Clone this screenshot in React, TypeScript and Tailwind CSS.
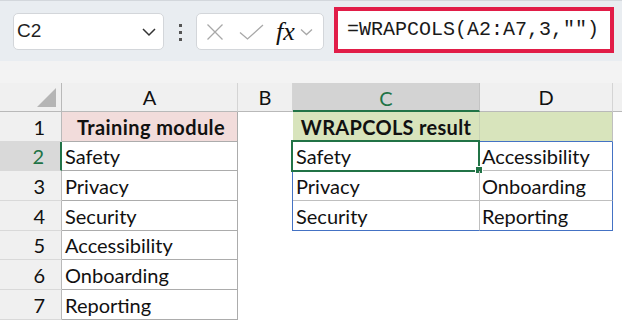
import React from "react";

const GRID_FONT = { fontFamily: "Lato, 'Open Sans', sans-serif" };

const rowHeights = ["h-[30px]", "h-[29px]", "h-[30px]", "h-[30px]", "h-[29px]", "h-[30px]", "h-[30px]"];
const listA = ["Training module", "Safety", "Privacy", "Security", "Accessibility", "Onboarding", "Reporting"];
const wrapped = [
  ["Safety", "Accessibility"],
  ["Privacy", "Onboarding"],
  ["Security", "Reporting"],
];

function Toolbar() {
  return (
    <div className="flex h-[61px] items-start border-t border-[#d3d7dc] bg-[#e9edf1]">
      <div className="ml-[13px] mt-[12px] flex h-[37px] w-[151px] items-center justify-between rounded-[5px] border border-[#d3d6da] bg-white pl-[3px] pr-[6px]">
        <span className="text-[19px] text-[#1f1f1f]" style={{ fontFamily: "'Liberation Sans', Arial, sans-serif" }}>
          C2
        </span>
        <svg width="16" height="10" viewBox="0 0 16 10" fill="none">
          <path d="M2 2l6 6 6-6" stroke="#333" strokeWidth="1.5" />
        </svg>
      </div>
      <div className="mt-[23px] flex w-[32px] flex-col items-center gap-[4px]">
        <span className="h-[3px] w-[3px] bg-[#555]" />
        <span className="h-[3px] w-[3px] bg-[#555]" />
        <span className="h-[3px] w-[3px] bg-[#555]" />
      </div>
      <div className="mt-[12px] flex h-[37px] w-[128px] items-center rounded-[5px] border border-[#d3d6da] bg-white pl-[9px]">
        <svg width="18" height="18" viewBox="0 0 18 18" fill="none">
          <path d="M1.5 1.5l15 15M16.5 1.5l-15 15" stroke="#a8a8a8" strokeWidth="1.3" />
        </svg>
        <svg className="ml-[15px]" width="25" height="16" viewBox="0 0 25 16" fill="none">
          <path d="M1 8.5l7.5 6.5L24 1" stroke="#a8a8a8" strokeWidth="1.3" />
        </svg>
        <span
          className="ml-[12px] text-[26px] italic leading-none text-[#111]"
          style={{ fontFamily: "'Liberation Serif', 'Times New Roman', serif" }}
        >
          fx
        </span>
        <svg className="ml-[5px]" width="13" height="8" viewBox="0 0 13 8" fill="none">
          <path d="M1 1.5l5.5 5 5.5-5" stroke="#a8a8a8" strokeWidth="1.3" />
        </svg>
      </div>
      <div className="ml-[10px] mt-[6px] flex h-[46px] w-[280px] items-center border-[4px] border-[#e11d48] bg-white pl-[9px]">
        <span className="text-[20px] text-[#1a1a1a]" style={{ fontFamily: "'Liberation Mono', 'DejaVu Sans Mono', monospace" }}>
          =WRAPCOLS(A2:A7,3,"")
        </span>
      </div>
    </div>
  );
}

function Sheet() {
  return (
    <div
      className="grid grid-cols-[62px_176px_55px_187px_133px_1fr] text-[20px] text-[#111]"
      style={GRID_FONT}
    >
      {/* column headers */}
      <div className="flex h-[29px] items-end justify-end border-r border-b border-[#b9b9b9] bg-[#f0f0f0] pb-[3px] pr-[4px]">
        <svg width="20" height="20" viewBox="0 0 20 20">
          <path d="M19 0V19H0Z" fill="#b5b5b5" />
        </svg>
      </div>
      <div className="flex h-[29px] items-center justify-center border-r border-b border-r-[#d4d4d4] border-b-[#b9b9b9] bg-[#f0f0f0]">A</div>
      <div className="flex h-[29px] items-center justify-center border-r border-b border-r-[#d4d4d4] border-b-[#b9b9b9] bg-[#f0f0f0]">B</div>
      <div className="flex h-[29px] items-center justify-center border-r border-b-2 border-r-[#c4c4c4] border-b-[#217346] bg-[#d3d3d3] pt-[2px] text-[#217346]">C</div>
      <div className="flex h-[29px] items-center justify-center border-r border-b border-r-[#d4d4d4] border-b-[#b9b9b9] bg-[#f0f0f0]">D</div>
      <div className="h-[29px] border-b border-[#b9b9b9] bg-[#f0f0f0]" />

      {rowHeights.map((h, i) => {
        const row = i + 1;
        const inTable = row >= 2 && row <= 4;
        const wrapRow = inTable ? wrapped[row - 2] : null;
        return (
          <React.Fragment key={row}>
            <div
              className={`flex ${h} items-center justify-end border-b border-b-[#d9d9d9] pr-[16px] ${
                row === 2
                  ? "border-r-2 border-r-[#217346] bg-[#d9d9d9] text-[#217346]"
                  : "border-r border-r-[#b9b9b9] bg-[#f0f0f0]"
              }`}
            >
              {row}
            </div>
            <div
              className={`flex ${h} items-center border-r border-b border-[#acacac] pl-[3px] ${
                row === 1 ? "justify-center bg-[#f2dcdb] font-bold tracking-[0.4px]" : "bg-white"
              }`}
            >
              {listA[i]}
            </div>
            <div className={`${h} bg-white ${inTable ? "border-r border-[#4472c4]" : ""}`} />
            {row === 1 ? (
              <>
                <div className={`flex ${h} items-center justify-center border-r border-b border-r-[#c9d3b4] border-b-[#4472c4] bg-[#d8e4bc] font-bold tracking-[0.3px]`}>
                  WRAPCOLS result
                </div>
                <div className={`${h} border-r border-b border-r-[#bfbfbf] border-b-[#4472c4] bg-[#d8e4bc]`} />
              </>
            ) : wrapRow ? (
              <>
                <div
                  className={`relative flex ${h} items-center border-r border-b border-r-[#bfbfbf] pl-[3px] ${
                    row === 4 ? "border-b-[#4472c4]" : "border-b-[#bfbfbf]"
                  }`}
                >
                  {wrapRow[0]}
                  {row === 2 && (
                    <>
                      <div className="absolute -left-[2px] -top-[2px] h-[32px] w-[189px] border-2 border-[#217346]" />
                      <div className="absolute -bottom-[4px] -right-[4px] h-[8px] w-[8px] border border-white bg-[#217346]" />
                    </>
                  )}
                </div>
                <div
                  className={`flex ${h} items-center border-r border-b border-r-[#4472c4] pl-[2px] ${
                    row === 4 ? "border-b-[#4472c4]" : "border-b-[#bfbfbf]"
                  }`}
                >
                  {wrapRow[1]}
                </div>
              </>
            ) : (
              <>
                <div className={`${h} bg-white`} />
                <div className={`${h} bg-white`} />
              </>
            )}
            <div className={`${h} bg-white`} />
          </React.Fragment>
        );
      })}
    </div>
  );
}

export default function App() {
  return (
    <div className="h-[320px] w-[622px] overflow-hidden bg-white">
      <Toolbar />
      <div className="h-[22px] bg-[#f3f3f3]" />
      <Sheet />
    </div>
  );
}
